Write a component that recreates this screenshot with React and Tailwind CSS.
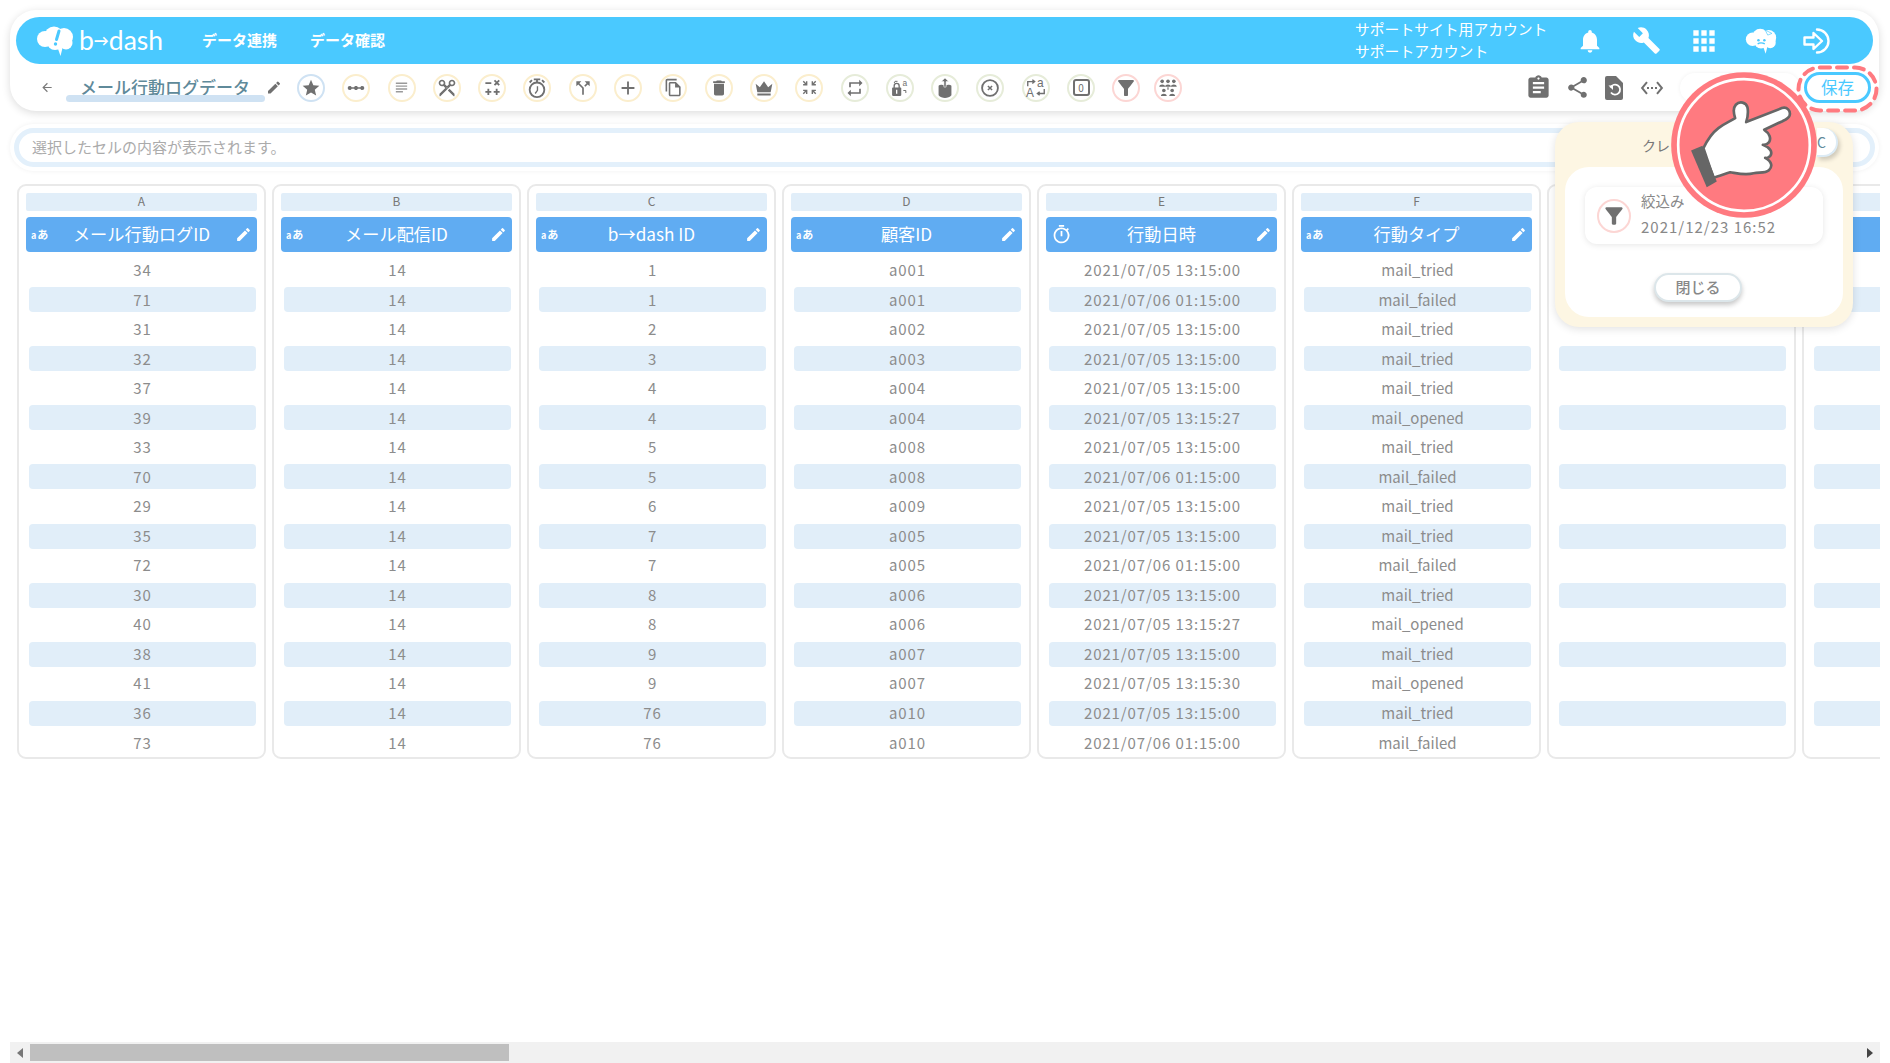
import React from "react";
import {
  MdStar, MdLinearScale, MdSubject, MdContentCut, MdCallSplit, MdAdd, MdOutlineFileCopy, MdDelete, MdZoomInMap, MdRepeat,
  MdFilterAlt, MdNotifications, MdBuild, MdApps, MdAssignment, MdShare, MdSettingsEthernet, MdEdit, MdArrowBack, MdOutlineTimer,
} from "react-icons/md";

const g = "#707070";
const Svg = ({ children, size = 18 }) => (
  <svg width={size} height={size} viewBox="0 0 24 24" fill="none">{children}</svg>
);

const Calc = () => (
  <Svg size={19}><path d="M3 6.500h7.500M14.500 3l6 6M20.500 3l-6 6M3 17.500h7.500M6.750 13.500v8M13.500 17.500h7.500M17.250 13.500v8" stroke={g} strokeWidth="2.300" /></Svg>
);
const Stopwatch = () => (
  <Svg size={22}>
    <circle cx="12" cy="14" r="8" stroke={g} strokeWidth="2" />
    <path d="M8.500 2.500h7M12 3v3M4 6l2.500-2.500M20 6l-2.500-2.500" stroke={g} strokeWidth="2" />
    <path d="M12.500 10v4.500L10 18" stroke={g} strokeWidth="1.500" />
  </Svg>
);
const Crown = () => (
  <Svg size={20}><path d="M2 7l5 4 5-7 5 7 5-4-2 10H4z M4 18.500h16V21H4z" fill={g} /></Svg>
);
const LockI = () => (
  <Svg size={20}>
    <path d="M5 12V9.500a3 3 0 0 1 6 0V12" stroke={g} strokeWidth="1.600" />
    <rect x="2.500" y="11.500" width="11" height="10" rx="1" fill={g} />
    <path d="M8 14v5" stroke="#fff" strokeWidth="1.600" />
    <text x="15" y="10" fontSize="10" fill={g} fontFamily="Liberation Sans">a</text>
    <path d="M16 15l3 0v3M5 6l1-2h3" stroke={g} strokeWidth="1.200" />
  </Svg>
);
const BoxUp = () => (
  <Svg size={22}>
    <path d="M5 9.500c1.500-1.500 4-1.500 7 .5 3-2 5.500-2 7-.5V20c-1.500 2-4.500 3-7 3s-5.500-1-7-3z" fill={g} />
    <path d="M12 1L8 5h2.800v6h2.400V5H16z" fill={g} stroke="#fff" strokeWidth="0.600" />
  </Svg>
);
const XCircle = () => (
  <Svg size={20}>
    <circle cx="12" cy="12" r="9.500" stroke={g} strokeWidth="2.200" />
    <path d="M9.500 9.500l5 5M14.500 9.500l-5 5" stroke={g} strokeWidth="1.800" />
  </Svg>
);
const Translate = () => (
  <Svg size={22}>
    <text x="1" y="22" fontSize="13" fill={g} fontFamily="Liberation Sans">A</text>
    <text x="13" y="11" fontSize="13" fill={g} fontFamily="Liberation Sans">a</text>
    <path d="M3 10V5h7M8 3l2.500 2L8 7M21 13v5h-7M16 16l-2.500 2 2.500 2" stroke={g} strokeWidth="1.500" />
  </Svg>
);
const Zero = () => (
  <div className="flex h-[17px] w-[17px] items-center justify-center rounded-[3px] border-2 border-[#707070] text-[10px] leading-none text-[#707070]">0</div>
);
const People = () => (
  <Svg size={20}>
    <g fill={g}>
      <circle cx="5" cy="4" r="2.200" /><circle cx="12" cy="4" r="2.200" /><circle cx="19" cy="4" r="2.200" />
      <path d="M1.500 10.500c0-3.500 7-3.500 7 0zM8.500 10.500c0-3.500 7-3.500 7 0zM15.500 10.500c0-3.500 7-3.500 7 0z" />
      <circle cx="7" cy="15" r="2.200" /><circle cx="17" cy="15" r="2.200" />
      <path d="M3.500 21.500c0-3.500 7-3.500 7 0zM13.500 21.500c0-3.500 7-3.500 7 0z" />
      <path d="M11.300 11h1.400v3h-1.400z" />
    </g>
  </Svg>
);

const tools = [
  ["blue", <MdStar size={20} color={g} />],
  ["yellow", <MdLinearScale size={20} color={g} />],
  ["yellow", <MdSubject size={17} color="#9a9a9a" />],
  ["yellow", <div className="rotate-90"><MdContentCut size={20} color={g} /></div>],
  ["yellow", <Calc />],
  ["yellow", <Stopwatch />],
  ["yellow", <MdCallSplit size={20} color={g} />],
  ["yellow", <MdAdd size={22} color={g} />],
  ["yellow", <MdOutlineFileCopy size={19} color={g} />],
  ["yellow", <MdDelete size={20} color={g} />],
  ["yellow", <Crown />],
  ["yellow", <MdZoomInMap size={17} color={g} />],
  ["green", <MdRepeat size={20} color={g} />],
  ["green", <LockI />],
  ["green", <BoxUp />],
  ["green", <XCircle />],
  ["green", <Translate />],
  ["green", <Zero />],
  ["red", <MdFilterAlt size={24} color={g} />],
  ["red", <People />],
];

function Tool({ tone, children, last }) {
  const border =
    tone === "blue" ? "border-[#cfe2f3]" : tone === "yellow" ? "border-[#fbeecd]" : tone === "green" ? "border-[#e6ecd9]" : "border-[#fcd6d4]";
  return (
    <div className={`flex h-[28px] w-[28px] shrink-0 items-center justify-center rounded-full border-2 bg-white ${border} ${last ? "-ml-[3.8px]" : ""}`}>
      {children}
    </div>
  );
}

const Cloud = ({ w = 38, h = 30, face }) => (
  <svg width={w} height={h} viewBox="0 0 38 30">
    <g fill="#fff">
      <circle cx="9" cy="13" r="8" />
      <circle cx="18" cy="10" r="9.500" />
      <circle cx="28" cy="11" r="9" />
      <circle cx="30" cy="17" r="6.500" />
      <circle cx="19" cy="16" r="8" />
      <path d="M21 20l6 0-2.500 10z" />
    </g>
    {face ? (
      <g>
        <circle cx="16" cy="14" r="1.500" fill="#4ac9ff" />
        <circle cx="23" cy="14" r="1.500" fill="#4ac9ff" />
        <path d="M15 18.500c2-1.500 6-1.500 8.500 0" stroke="#4ac9ff" strokeWidth="1.600" fill="none" />
        <path d="M24 2l8 4-5 2z" fill="#fff" stroke="#4ac9ff" strokeWidth="0.800" />
      </g>
    ) : (
      <g>
        <path d="M23 5l-2.500 8.500" stroke="#4ac9ff" strokeWidth="3" strokeLinecap="round" />
        <circle cx="19.500" cy="18" r="1.700" fill="#4ac9ff" />
      </g>
    )}
  </svg>
);

const Login = () => (
  <svg width="32" height="32" viewBox="0 0 32 32" fill="none" stroke="#fff" strokeWidth="2.400">
    <path d="M15 4.500a11.500 11.500 0 1 1 0 23" strokeLinecap="round" />
    <path d="M2.500 12.500h9V8l8.500 8-8.500 8v-4.500h-9z" strokeLinejoin="round" />
  </svg>
);

const DocRefresh = () => (
  <svg width="20" height="26" viewBox="0 0 20 26">
    <path d="M3 1h9l7 7v15a2 2 0 0 1-2 2H3a2 2 0 0 1-2-2V3a2 2 0 0 1 2-2z" fill={g} />
    <path d="M6.500 12.500a5 5 0 1 1 .5 5" stroke="#fff" strokeWidth="1.800" fill="none" />
    <path d="M4.500 10.500h4.500v4.500z" fill="#fff" />
  </svg>
);

const Aa = () => (
  <span className="flex items-baseline gap-[1px] font-bold leading-none text-white">
    <span className="text-[9px]">a</span>
    <span className="text-[11px]">あ</span>
  </span>
);

const T1 = "2021/07/05 13:15:00";
const T2 = "2021/07/06 01:15:00";
const T3 = "2021/07/05 13:15:27";
const T4 = "2021/07/05 13:15:30";
const MT = "mail_tried", MF = "mail_failed", MO = "mail_opened";

const blank = Array(17).fill("");
const columns = [
  { l: "A", t: "メール行動ログID", rows: [34, 71, 31, 32, 37, 39, 33, 70, 29, 35, 72, 30, 40, 38, 41, 36, 73] },
  { l: "B", t: "メール配信ID", rows: Array(17).fill(14) },
  { l: "C", t: "b→dash ID", rows: [1, 1, 2, 3, 4, 4, 5, 5, 6, 7, 7, 8, 8, 9, 9, 76, 76] },
  { l: "D", t: "顧客ID", rows: ["a001", "a001", "a002", "a003", "a004", "a004", "a008", "a008", "a009", "a005", "a005", "a006", "a006", "a007", "a007", "a010", "a010"] },
  { l: "E", t: "行動日時", time: true, rows: [T1, T2, T1, T1, T1, T3, T1, T2, T1, T1, T2, T1, T3, T1, T4, T1, T2] },
  { l: "F", t: "行動タイプ", mail: true, rows: [MT, MF, MT, MT, MT, MO, MT, MF, MT, MT, MF, MT, MO, MT, MO, MT, MF] },
  { l: "G", t: "", rows: blank },
  { l: "H", t: "", rows: blank },
];

function Column({ c }) {
  return (
    <div className="h-[575px] w-[249px] shrink-0 rounded-[9px] border-2 border-[#e9e9e9] bg-white pl-[7px] pt-[7px]">
      <div className="flex h-[18px] w-[231px] items-center justify-center rounded-[2px] bg-[#e1eef9] pb-[3px] text-[12px] text-[#777]">{c.l}</div>
      <div className="mt-[6px] flex h-[35px] w-[231px] items-center rounded-[4px] bg-[#60acf2] pl-[5px] pr-[5px] text-white">
        <div className="flex w-[24px] justify-start">{c.time ? <MdOutlineTimer size={21} color="#fff" /> : c.t ? <Aa /> : null}</div>
        <div className="flex-1 whitespace-nowrap pb-[2px] text-center text-[17.200px] leading-none">{c.t}</div>
        <div className="flex w-[24px] justify-end">{c.t ? <MdEdit size={17} color="#fff" /> : null}</div>
      </div>
      <div className="mt-[3.500px]">
        {c.rows.map((r, i) => (
          <div key={i} className="flex h-[29.540px] items-center">
            <div className={`ml-[3px] flex h-[25px] w-[227px] items-center justify-center rounded-[4px] text-[15px] text-[#8c8c8c] ${c.mail ? "tracking-normal" : "tracking-[0.9px]"} ${i % 2 ? "bg-[#e1eef9]" : ""}`}>
              {r}
            </div>
          </div>
        ))}
      </div>
    </div>
  );
}

export default function App() {
  return (
    <div className="relative flex h-[1063px] w-[1890px] flex-col overflow-hidden bg-white font-['Noto_Sans_CJK_JP','Noto_Sans',sans-serif]">
      {/* top card */}
      <div className="ml-[10px] mt-[10px] h-[101px] w-[1869px] shrink-0 rounded-[26px] bg-white px-[6px] pt-[7px] shadow-[0_2px_9px_rgba(0,0,0,0.14)]">
        <div className="flex h-[47px] items-center rounded-full bg-[#4ac9ff] pl-[20px] text-white">
          <Cloud />
          <div className="ml-[5px] flex w-[83px] items-center whitespace-nowrap font-['Lato',sans-serif] text-[26.500px] font-normal leading-none">
            b<span className="text-[15px] font-bold">→</span>dash
          </div>
          <div className="ml-[40px] text-[15px] font-bold">データ連携</div>
          <div className="ml-[33px] text-[15px] font-bold">データ確認</div>
          <div className="mb-[2px] ml-auto mr-[14px] w-[192px] whitespace-nowrap text-[14.800px] leading-[22px]">
            <div>サポートサイト用アカウント</div>
            <div>サポートアカウント</div>
          </div>
          <div className="flex w-[57px] justify-center"><MdNotifications size={28} color="#fff" /></div>
          <div className="flex w-[57px] justify-center"><MdBuild size={29} color="#fff" /></div>
          <div className="flex w-[57px] justify-center"><MdApps size={32} color="#fff" /></div>
          <div className="flex w-[57px] justify-center"><Cloud w={32} h={28} face /></div>
          <div className="mr-[27px] flex w-[57px] justify-center"><Login /></div>
        </div>
        <div className="flex h-[47px] items-center">
          <div className="ml-[24px] flex w-[14px] justify-center"><MdArrowBack size={15} color="#7a7a7a" /></div>
          <div className="ml-[12px] mt-[3px] flex w-[199px] flex-col">
            <div className="whitespace-nowrap pl-[14px] pt-[1px] text-[17px] font-medium leading-[19px] text-[#5f8a9a]">メール行動ログデータ</div>
            <div className="-mt-[1px] h-[7px] rounded-full bg-[#cfe2f3]" />
          </div>
          <div className="ml-[1px] flex w-[16px] justify-center"><MdEdit size={17} color={g} /></div>
          <div className="ml-[15px] flex items-center gap-[17.300px]">
            {tools.map(([tone, icon], i) => (
              <Tool key={i} tone={tone} last={i === tools.length - 1}>{icon}</Tool>
            ))}
          </div>
          <div className="ml-auto flex items-center pr-[2px]">
            <MdAssignment size={27} color={g} />
            <div className="ml-[13px]"><MdShare size={25} color={g} /></div>
            <div className="ml-[14px]"><DocRefresh /></div>
            <div className="ml-[16px]"><MdSettingsEthernet size={24} color={g} /></div>
            <div className="ml-[16px] h-[30px] w-[120px] rounded-full bg-white shadow-[0_0_4px_rgba(0,0,0,0.06)]" />
            <div className="ml-[4px] flex h-[31px] w-[67px] items-center justify-center rounded-full border-[3px] border-[#4ac9ff] bg-white text-[16.500px] text-[#4ac9ff]">保存</div>
          </div>
        </div>
      </div>

      {/* cell content bar */}
      <div className="ml-[10px] mt-[13px] flex h-[47px] w-[1869px] shrink-0 rounded-[24px] bg-white p-[4px] shadow-[0_0_5px_rgba(0,0,0,0.06)]">
        <div className="flex h-[39px] w-full items-center rounded-full border-[5px] border-[#e3f0fb] pb-[1px] pl-[13px] text-[15px] text-[#ababab]">
          選択したセルの内容が表示されます。
        </div>
      </div>

      {/* table */}
      <div className="ml-[17px] mt-[13px] flex w-[1863px] shrink-0 gap-[6px] overflow-hidden">
        {columns.map((c) => (
          <Column key={c.l} c={c} />
        ))}
      </div>

      {/* scrollbar */}
      <div className="ml-[10px] mt-auto flex h-[21px] w-[1870px] shrink-0 items-center bg-[#f1f1f1]">
        <div className="ml-[7px] h-0 w-0 border-y-[5px] border-r-[6px] border-y-transparent border-r-[#777]" />
        <div className="ml-[7px] h-[17px] w-[479px] bg-[#bfbfbf]" />
        <div className="ml-auto mr-[7px] h-0 w-0 border-y-[5px] border-l-[6px] border-y-transparent border-l-[#444]" />
      </div>

      {/* dashed highlight */}
      <svg className="absolute left-[1796px] top-[65px]" width="83" height="48" viewBox="0 0 83 48" fill="none">
        <rect x="2.500" y="2.500" width="78" height="43" rx="21.500" stroke="#ff7a80" strokeWidth="4" strokeDasharray="10 7" strokeLinecap="round" />
      </svg>

      {/* history popover */}
      <div className="absolute left-[1555px] top-[122px] h-[205px] w-[298px] rounded-[24px] bg-[#fdf6e3] p-[10px] shadow-[0_2px_8px_rgba(0,0,0,0.12)]">
        <div className="flex h-[35px] items-start pl-[77px] pt-[6px] text-[14px] leading-none text-[#777]">クレンジング</div>
        <div className="flex h-[150px] w-[278px] flex-col items-center rounded-[24px] bg-white pt-[20px]">
          <div className="flex h-[57px] w-[238px] items-center rounded-[12px] bg-white shadow-[0_1px_6px_rgba(0,0,0,0.10)]">
            <div className="ml-[12px] flex h-[34px] w-[34px] items-center justify-center rounded-full border-2 border-[#fcd6d4]">
              <MdFilterAlt size={26} color={g} />
            </div>
            <div className="mb-[4.500px] ml-[10px] leading-[23px] text-[#888]">
              <div className="text-[14.500px]">絞込み</div>
              <div className="mt-[2.500px] text-[15px] tracking-[1px]">2021/12/23 16:52</div>
            </div>
          </div>
          <div className="mr-[12px] mt-[29px] flex h-[29px] w-[88px] items-center justify-center rounded-full border-2 border-[#dce6ea] bg-white text-[15px] font-medium text-[#888] shadow-[0_3px_5px_rgba(0,0,0,0.22)]">閉じる</div>
        </div>
        <div className="absolute left-[262px] top-[6px] flex h-[29px] w-[21px] items-center justify-start rounded-r-full border-b-2 border-r-2 border-[#dcebf5] bg-white pt-[2px] text-[14px] text-[#5f8a9a] shadow-[2px_3px_4px_rgba(0,0,0,0.18)]">C</div>
      </div>

      {/* pointing hand */}
      <svg className="absolute left-[1671px] top-[72px]" width="146" height="146" viewBox="3 22 437 437">
        <circle cx="221.500" cy="240.500" r="218" fill="#ff7a80" />
        <circle cx="221.500" cy="240.500" r="197" fill="none" stroke="#fff" strokeWidth="8" />
        <path
          d="M100 250 C112 225 125 205 145 190 C165 175 180 170 195 160 C190 145 188 130 197 120 C208 108 228 112 232 128 C235 145 232 160 228 172 L335 130 C350 125 362 138 358 152 C354 162 345 165 335 170 L282 195 C298 205 304 222 296 233 C290 240 284 241 278 240 C300 248 308 262 300 273 C296 278 290 280 285 279 C305 290 308 305 296 316 C286 325 270 322 250 325 C225 332 200 325 180 322 C160 328 145 335 130 338 Z"
          fill="#fff"
          stroke="#666"
          strokeWidth="8"
          strokeLinejoin="round"
        />
        <path d="M63 257L97 243 140 350 110 367Z" fill="#666" />
      </svg>
    </div>
  );
}
